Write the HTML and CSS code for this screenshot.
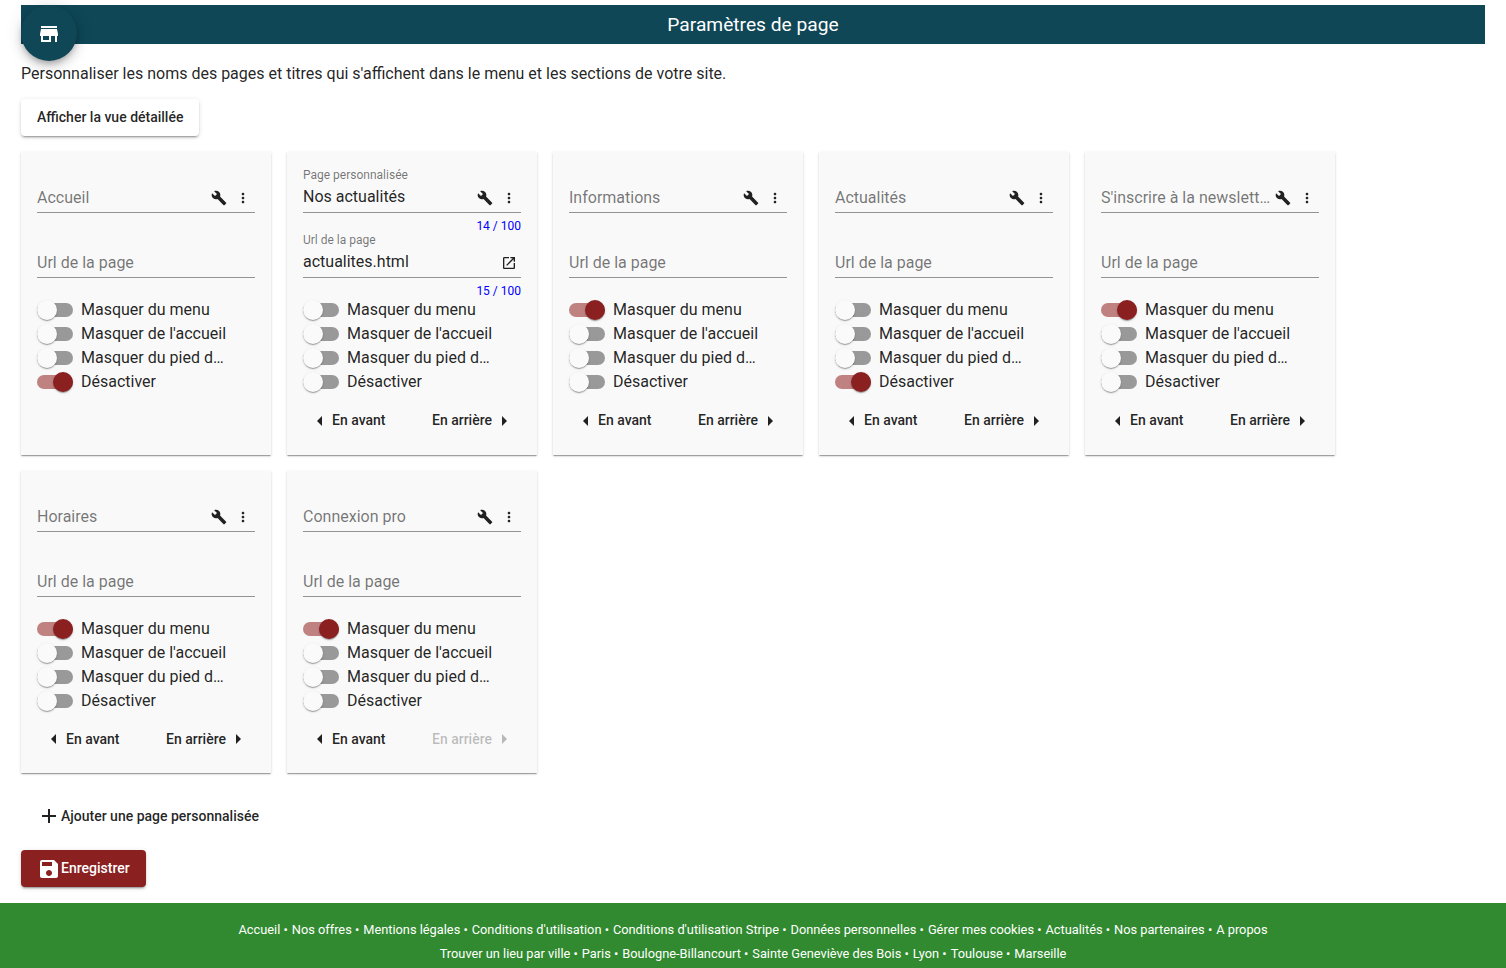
FILE: index.html
```html
<!DOCTYPE html>
<html lang="fr">
<head>
<meta charset="utf-8">
<title>Paramètres de page</title>
<link rel="stylesheet" href="styles.css">
</head>
<body>
<svg class="sprite" aria-hidden="true">
  <symbol id="build" viewBox="0 0 24 24"><path d="M22.7 19l-9.1-9.1c.9-2.3.4-5-1.5-6.9-2-2-5-2.4-7.4-1.3L9 6 6 9 1.6 4.7C.4 7.1.9 10.1 2.9 12.1c1.9 1.9 4.6 2.4 6.9 1.5l9.1 9.1c.4.4 1 .4 1.4 0l2.3-2.3c.5-.4.5-1.1.1-1.4z"/></symbol>
  <symbol id="more" viewBox="0 0 24 24"><path d="M12 8c1.1 0 2-.9 2-2s-.9-2-2-2-2 .9-2 2 .9 2 2 2zm0 2c-1.1 0-2 .9-2 2s.9 2 2 2 2-.9 2-2-.9-2-2-2zm0 6c-1.1 0-2 .9-2 2s.9 2 2 2 2-.9 2-2-.9-2-2-2z"/></symbol>
  <symbol id="open" viewBox="0 0 24 24"><path d="M19 19H5V5h7V3H5c-1.11 0-2 .9-2 2v14c0 1.1.89 2 2 2h14c1.1 0 2-.9 2-2v-7h-2v7zM14 3v2h3.59l-9.83 9.83 1.41 1.41L19 6.41V10h2V3h-7z"/></symbol>
  <symbol id="left" viewBox="0 0 24 24"><path d="M14 7l-5 5 5 5V7z"/></symbol>
  <symbol id="right" viewBox="0 0 24 24"><path d="M10 17l5-5-5-5v10z"/></symbol>
  <symbol id="add" viewBox="0 0 24 24"><path d="M19 13h-6v6h-2v-6H5v-2h6V5h2v6h6v2z"/></symbol>
  <symbol id="save" viewBox="0 0 24 24"><path d="M17 3H5c-1.11 0-2 .9-2 2v14c0 1.1.89 2 2 2h14c1.1 0 2-.9 2-2V7l-4-4zm-5 16c-1.66 0-3-1.34-3-3s1.34-3 3-3 3 1.34 3 3-1.34 3-3 3zm3-10H5V5h10v4z"/></symbol>
  <symbol id="store" viewBox="0 0 24 24"><path d="M20 4H4v2h16V4zm1 10v-2l-1-5H4l-1 5v2h1v6h10v-6h4v6h2v-6h1zm-9 4H6v-4h6v4z"/></symbol>
</svg>
<button class="fab" aria-label="Boutique"><svg><use href="#store"/></svg></button>
<main class="page">
  <h1 class="title">Paramètres de page</h1>
  <p class="intro">Personnaliser les noms des pages et titres qui s'affichent dans le menu et les sections de votre site.</p>
  <button class="btn raised">Afficher la vue détaillée</button>
  <section class="cards">
    <article class="card">
      <div class="field"><div class="box"><span class="placeholder">Accueil</span><svg class="ico"><use href="#build"/></svg><svg class="ico"><use href="#more"/></svg></div></div>
      <div class="field"><div class="box"><span class="placeholder">Url de la page</span></div></div>
      <div class="toggle"><i class="track"></i><span>Masquer du menu</span></div>
      <div class="toggle"><i class="track"></i><span>Masquer de l'accueil</span></div>
      <div class="toggle"><i class="track"></i><span>Masquer du pied de page</span></div>
      <div class="toggle on"><i class="track"></i><span>Désactiver</span></div>
    </article>
    <article class="card">
      <div class="field"><label class="label">Page personnalisée</label><div class="box"><span class="value">Nos actualités</span><svg class="ico"><use href="#build"/></svg><svg class="ico"><use href="#more"/></svg></div><div class="count">14 / 100</div></div>
      <div class="field"><label class="label">Url de la page</label><div class="box"><span class="value">actualites.html</span><svg class="ico"><use href="#open"/></svg></div><div class="count">15 / 100</div></div>
      <div class="toggle"><i class="track"></i><span>Masquer du menu</span></div>
      <div class="toggle"><i class="track"></i><span>Masquer de l'accueil</span></div>
      <div class="toggle"><i class="track"></i><span>Masquer du pied de page</span></div>
      <div class="toggle"><i class="track"></i><span>Désactiver</span></div>
      <div class="moves"><button class="move"><svg><use href="#left"/></svg>En avant</button><button class="move">En arrière<svg><use href="#right"/></svg></button></div>
    </article>
    <article class="card">
      <div class="field"><div class="box"><span class="placeholder">Informations</span><svg class="ico"><use href="#build"/></svg><svg class="ico"><use href="#more"/></svg></div></div>
      <div class="field"><div class="box"><span class="placeholder">Url de la page</span></div></div>
      <div class="toggle on"><i class="track"></i><span>Masquer du menu</span></div>
      <div class="toggle"><i class="track"></i><span>Masquer de l'accueil</span></div>
      <div class="toggle"><i class="track"></i><span>Masquer du pied de page</span></div>
      <div class="toggle"><i class="track"></i><span>Désactiver</span></div>
      <div class="moves"><button class="move"><svg><use href="#left"/></svg>En avant</button><button class="move">En arrière<svg><use href="#right"/></svg></button></div>
    </article>
    <article class="card">
      <div class="field"><div class="box"><span class="placeholder">Actualités</span><svg class="ico"><use href="#build"/></svg><svg class="ico"><use href="#more"/></svg></div></div>
      <div class="field"><div class="box"><span class="placeholder">Url de la page</span></div></div>
      <div class="toggle"><i class="track"></i><span>Masquer du menu</span></div>
      <div class="toggle"><i class="track"></i><span>Masquer de l'accueil</span></div>
      <div class="toggle"><i class="track"></i><span>Masquer du pied de page</span></div>
      <div class="toggle on"><i class="track"></i><span>Désactiver</span></div>
      <div class="moves"><button class="move"><svg><use href="#left"/></svg>En avant</button><button class="move">En arrière<svg><use href="#right"/></svg></button></div>
    </article>
    <article class="card">
      <div class="field"><div class="box"><span class="placeholder">S'inscrire à la newsletter</span><svg class="ico"><use href="#build"/></svg><svg class="ico"><use href="#more"/></svg></div></div>
      <div class="field"><div class="box"><span class="placeholder">Url de la page</span></div></div>
      <div class="toggle on"><i class="track"></i><span>Masquer du menu</span></div>
      <div class="toggle"><i class="track"></i><span>Masquer de l'accueil</span></div>
      <div class="toggle"><i class="track"></i><span>Masquer du pied de page</span></div>
      <div class="toggle"><i class="track"></i><span>Désactiver</span></div>
      <div class="moves"><button class="move"><svg><use href="#left"/></svg>En avant</button><button class="move">En arrière<svg><use href="#right"/></svg></button></div>
    </article>
    <article class="card">
      <div class="field"><div class="box"><span class="placeholder">Horaires</span><svg class="ico"><use href="#build"/></svg><svg class="ico"><use href="#more"/></svg></div></div>
      <div class="field"><div class="box"><span class="placeholder">Url de la page</span></div></div>
      <div class="toggle on"><i class="track"></i><span>Masquer du menu</span></div>
      <div class="toggle"><i class="track"></i><span>Masquer de l'accueil</span></div>
      <div class="toggle"><i class="track"></i><span>Masquer du pied de page</span></div>
      <div class="toggle"><i class="track"></i><span>Désactiver</span></div>
      <div class="moves"><button class="move"><svg><use href="#left"/></svg>En avant</button><button class="move">En arrière<svg><use href="#right"/></svg></button></div>
    </article>
    <article class="card">
      <div class="field"><div class="box"><span class="placeholder">Connexion pro</span><svg class="ico"><use href="#build"/></svg><svg class="ico"><use href="#more"/></svg></div></div>
      <div class="field"><div class="box"><span class="placeholder">Url de la page</span></div></div>
      <div class="toggle on"><i class="track"></i><span>Masquer du menu</span></div>
      <div class="toggle"><i class="track"></i><span>Masquer de l'accueil</span></div>
      <div class="toggle"><i class="track"></i><span>Masquer du pied de page</span></div>
      <div class="toggle"><i class="track"></i><span>Désactiver</span></div>
      <div class="moves"><button class="move"><svg><use href="#left"/></svg>En avant</button><button class="move" disabled>En arrière<svg><use href="#right"/></svg></button></div>
    </article>
  </section>
  <button class="btn add"><svg><use href="#add"/></svg>Ajouter une page personnalisée</button>
  <button class="btn raised primary"><svg><use href="#save"/></svg>Enregistrer</button>
</main>
<footer class="footer">
  <nav class="links"><a>Accueil</a> • <a>Nos offres</a> • <a>Mentions légales</a> • <a>Conditions d'utilisation</a> • <a>Conditions d'utilisation Stripe</a> • <a>Données personnelles</a> • <a>Gérer mes cookies</a> • <a>Actualités</a> • <a>Nos partenaires</a> • <a>A propos</a></nav>
  <nav class="links"><a>Trouver un lieu par ville</a> • <a>Paris</a> • <a>Boulogne-Billancourt</a> • <a>Sainte Geneviève des Bois</a> • <a>Lyon</a> • <a>Toulouse</a> • <a>Marseille</a></nav>
</footer>
</body>
</html>
```
FILE: styles.css
```css
* { box-sizing: border-box; }
html { height: 100%; overflow: hidden; }
body {
  margin: 0;
  height: 968px;
  overflow: hidden;
  display: flex;
  flex-direction: column;
  background: #fff;
  color: rgba(0, 0, 0, .87);
  font: 16px/24px Roboto, sans-serif;
}
svg { fill: currentColor; flex: none; width: 24px; height: 24px; }
.sprite { position: absolute; width: 0; height: 0; }
button { font: inherit; color: inherit; border: 0; margin: 0; background: none; }

.fab {
  position: absolute;
  left: 21px;
  top: 5px;
  width: 56px;
  height: 56px;
  padding: 17px 16px 15px;
  border-radius: 50%;
  background: #0f4757;
  color: #fff;
  line-height: 0;
  box-shadow: 0 3px 5px -1px rgba(0, 0, 0, .2), 0 6px 10px rgba(0, 0, 0, .14), 0 1px 18px rgba(0, 0, 0, .12);
}
.fab svg { display: block; }

.page {
  height: 903px;
  flex: none;
  padding: 5px 21px 16px;
  display: flex;
  flex-direction: column;
  align-items: flex-start;
}
.title {
  align-self: stretch;
  height: 39px;
  margin: 0;
  background: #0f4757;
  color: #fff;
  font-size: 19.2px;
  font-weight: 400;
  line-height: 39px;
  text-align: center;
}
.intro { margin: 18px 0 13px; }

.btn {
  display: flex;
  align-items: center;
  height: 37px;
  padding: 0 16px;
  border-radius: 4px;
  font-size: 14px;
  font-weight: 500;
}
.raised {
  padding-bottom: 1px;
  box-shadow: 0 3px 1px -2px rgba(0, 0, 0, .2), 0 2px 2px rgba(0, 0, 0, .14), 0 1px 5px rgba(0, 0, 0, .12);
}
.add { margin: 24px 0 16px; }
.primary { background: #8b2020; color: #fff; }
.primary svg { margin: 2px 0 0; }

.cards {
  margin-top: 16px;
  display: grid;
  grid-template-columns: repeat(5, 250px);
  grid-template-rows: 303px 302px;
  gap: 16px;
}
.card {
  padding: 16px;
  background: #f9f9f9;
  box-shadow: 0 2px 1px -1px rgba(0, 0, 0, .2), 0 1px 1px rgba(0, 0, 0, .14), 0 1px 3px rgba(0, 0, 0, .12);
}

.field {
  height: 65px;
  display: grid;
  grid-template-columns: 218px;
  grid-template-rows: 14px 31px 20px;
}
.label { font-size: 12px; line-height: 14px; color: rgba(0, 0, 0, .54); white-space: nowrap; }
.box {
  grid-row: 2;
  display: flex;
  align-items: center;
  border-bottom: 1px solid #949494;
}
.box span { flex: 1; min-width: 0; overflow: hidden; text-overflow: ellipsis; white-space: nowrap; }
.placeholder { color: rgba(0, 0, 0, .54); padding-top: 1px; }
.value { padding-bottom: 1px; }
.ico { width: 16px; height: 16px; margin: 2px 4px 0; }
.count { grid-row: 3; padding-top: 6px; font-size: 12px; line-height: 14px; text-align: right; color: #00f; }

.toggle { display: flex; align-items: center; height: 24px; }
.toggle span { width: 147px; overflow: hidden; text-overflow: ellipsis; white-space: nowrap; }
.track {
  display: flex;
  align-items: center;
  width: 36px;
  height: 14px;
  margin-right: 8px;
  border-radius: 8px;
  background: #999;
}
.track::before {
  content: "";
  flex: none;
  width: 20px;
  height: 20px;
  border-radius: 50%;
  background: #fafafa;
  box-shadow: 0 2px 1px -1px rgba(0, 0, 0, .2), 0 1px 1px rgba(0, 0, 0, .14), 0 1px 3px rgba(0, 0, 0, .12);
}
.on .track { justify-content: flex-end; background: #c08181; }
.on .track::before { background: #8b2020; }

.moves { display: flex; justify-content: space-between; padding: 8px 5px 0; }
.move {
  display: flex;
  align-items: center;
  height: 36px;
  padding: 0;
  font-size: 14px;
  font-weight: 500;
}
.move:disabled { color: rgba(0, 0, 0, .26); }
.card:nth-child(-n+5) .move svg { margin-top: 2px; }

.footer {
  flex: 1 0 65px;
  padding-top: 15px;
  background: #318a2f;
  color: #fff;
  font-size: 12.8px;
  text-align: center;
}
.links a + a { margin-left: .8px; }
```
